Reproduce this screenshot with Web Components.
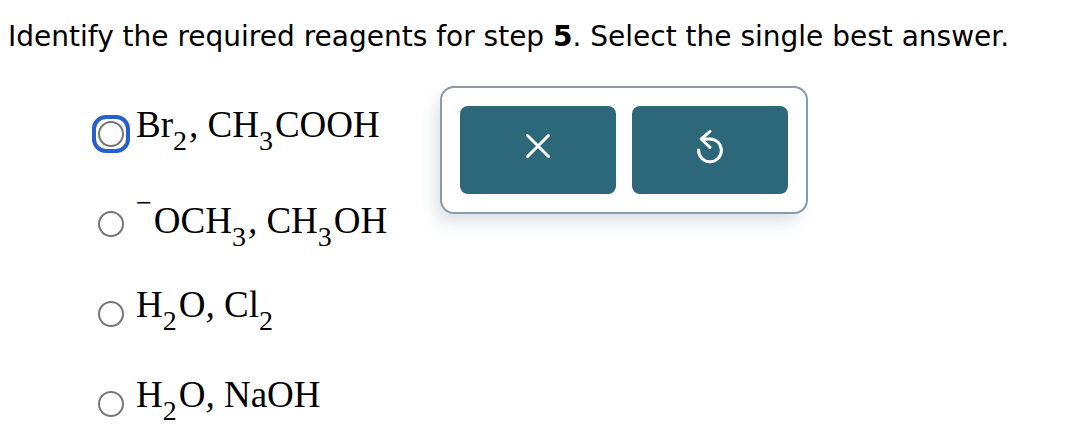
<!DOCTYPE html>
<html lang="en">
<head>
<meta charset="utf-8">
<meta name="viewport" content="width=device-width, initial-scale=1">
<title>Reagents</title>
<style>
  body {
    margin: 0;
    background: #fff;
    color: #000;
  }
</style>
</head>
<body>
<question-page>
  <span slot="prompt">Identify the required reagents for step <b>5</b>. Select the single best answer.</span>

  <answer-option active>
    <input slot="control" type="radio" name="reagents" id="a1">
    <label for="a1"><chem-formula value="Br_2, CH_3COOH"></chem-formula></label>
  </answer-option>
  <answer-option>
    <input slot="control" type="radio" name="reagents" id="a2">
    <label for="a2"><chem-formula value="^−OCH_3, CH_3OH"></chem-formula></label>
  </answer-option>
  <answer-option>
    <input slot="control" type="radio" name="reagents" id="a3">
    <label for="a3"><chem-formula value="H_2O, Cl_2"></chem-formula></label>
  </answer-option>
  <answer-option>
    <input slot="control" type="radio" name="reagents" id="a4">
    <label for="a4"><chem-formula value="H_2O, NaOH"></chem-formula></label>
  </answer-option>

  <tool-panel slot="tools"></tool-panel>
</question-page>

<script>
class QuestionPage extends HTMLElement {
  connectedCallback() {
    if (this.shadowRoot) return;
    const shadow = this.attachShadow({ mode: 'open' });

    shadow.innerHTML = `
      <style>
        :host {
          display: block;
          padding: 20px 8px 0;
        }
        .prompt {
          margin: 0;
          font: 28px/34px Verdana, "DejaVu Sans", sans-serif;
        }
        .body {
          display: grid;
          grid-template-columns: 348px auto;
          justify-content: start;
          align-items: start;
          margin-top: 32px;
          padding-left: 84px;
        }
        .options {
          display: flex;
          flex-direction: column;
          gap: 40px;
          padding-top: 19px;
        }
      </style>
      <p class="prompt"><slot name="prompt"></slot></p>
      <div class="body">
        <div class="options" role="radiogroup"><slot></slot></div>
        <slot name="tools"></slot>
      </div>
    `;

    // Radios live in the light DOM, so the native group keeps working
    this.addEventListener('focusin', (e) => {
      const option = e.target.closest('answer-option');
      if (!option) return;
      this.querySelectorAll('answer-option').forEach(o => {
        o.toggleAttribute('active', o === option);
      });
    });
  }

  clear() {
    this.querySelectorAll('input').forEach(input => {
      input.checked = false;
    });
  }
}

class AnswerOption extends HTMLElement {
  connectedCallback() {
    if (this.shadowRoot) return;
    const shadow = this.attachShadow({ mode: 'open' });

    shadow.innerHTML = `
      <style>
        :host {
          display: flex;
          align-items: flex-start;
          gap: 6px;
          height: 50px;
        }
        .ring {
          display: flex;
          flex: none;
          margin-top: 10px;
          padding: 2px;
          border: 4px solid transparent;
          border-radius: 14px;
        }
        :host([active]) .ring {
          border-color: #285fc8;
        }
        ::slotted(input) {
          appearance: none;
          box-sizing: border-box;
          width: 26px;
          height: 26px;
          margin: 0;
          border: 2px solid #767676;
          border-radius: 50%;
          background: #fff;
          outline: none;
        }
        ::slotted(input:checked) {
          background: radial-gradient(#285fc8 7px, #fff 8px);
        }
        ::slotted(label) {
          white-space: nowrap;
        }
      </style>
      <span class="ring"><slot name="control"></slot></span>
      <slot></slot>
    `;
  }
}

// value syntax: _x is a subscript, ^x a superscript
class ChemFormula extends HTMLElement {
  connectedCallback() {
    if (this.shadowRoot) return;
    const shadow = this.attachShadow({ mode: 'open' });

    shadow.innerHTML = `
      <style>
        :host {
          display: block;
          font: 37px/40px "Times New Roman", "Liberation Serif", serif;
        }
        sub, sup {
          font-size: 28px;
          line-height: 16px;
          margin-right: 2px;
        }
        sub {
          vertical-align: -13px;
        }
        sup {
          vertical-align: 21px;
        }
      </style>
      ${this.toMarkup(this.getAttribute('value') || '')}
    `;
  }

  toMarkup(text) {
    return text
      .replace(/_(.)/g, '<sub>$1</sub>')
      .replace(/\^(.)/g, '<sup>$1</sup>')
      .replace(/,/g, '<i>,</i>');
  }
}

class ToolPanel extends HTMLElement {
  connectedCallback() {
    if (this.shadowRoot) return;
    const shadow = this.attachShadow({ mode: 'open' });

    shadow.innerHTML = `
      <style>
        :host {
          display: flex;
          gap: 16px;
          padding: 18px;
          border: 2px solid #879da7;
          border-radius: 14px;
          background: #fff;
          box-shadow: -6px 10px 16px -2px rgba(30, 70, 85, 0.16);
        }
        button {
          display: flex;
          align-items: center;
          justify-content: center;
          width: 156px;
          height: 88px;
          padding: 0 0 8px;
          border: 0;
          border-radius: 8px;
          background: #2d687a;
          cursor: pointer;
        }
        svg {
          width: 32px;
          height: 36px;
          fill: none;
          stroke: #fff;
          stroke-width: 3;
          stroke-linecap: round;
          stroke-linejoin: round;
        }
      </style>
      <button type="button" class="clear" aria-label="Clear">
        <svg viewBox="0 0 32 36"><path d="M5.5 7.5 26.5 28.5M26.5 7.5 5.5 28.5"/></svg>
      </button>
      <button type="button" class="reset" aria-label="Reset">
        <svg viewBox="0 0 32 36"><path d="M4.6 22A11.4 11.4 0 1 0 16 10.9H7.2M16 3.4 7.2 11 16 19.4"/></svg>
      </button>
    `;

    shadow.querySelectorAll('button').forEach(button => {
      button.addEventListener('click', () => {
        this.closest('question-page').clear();
      });
    });
  }
}

customElements.define('question-page', QuestionPage);
customElements.define('answer-option', AnswerOption);
customElements.define('chem-formula', ChemFormula);
customElements.define('tool-panel', ToolPanel);
</script>
</body>
</html>
